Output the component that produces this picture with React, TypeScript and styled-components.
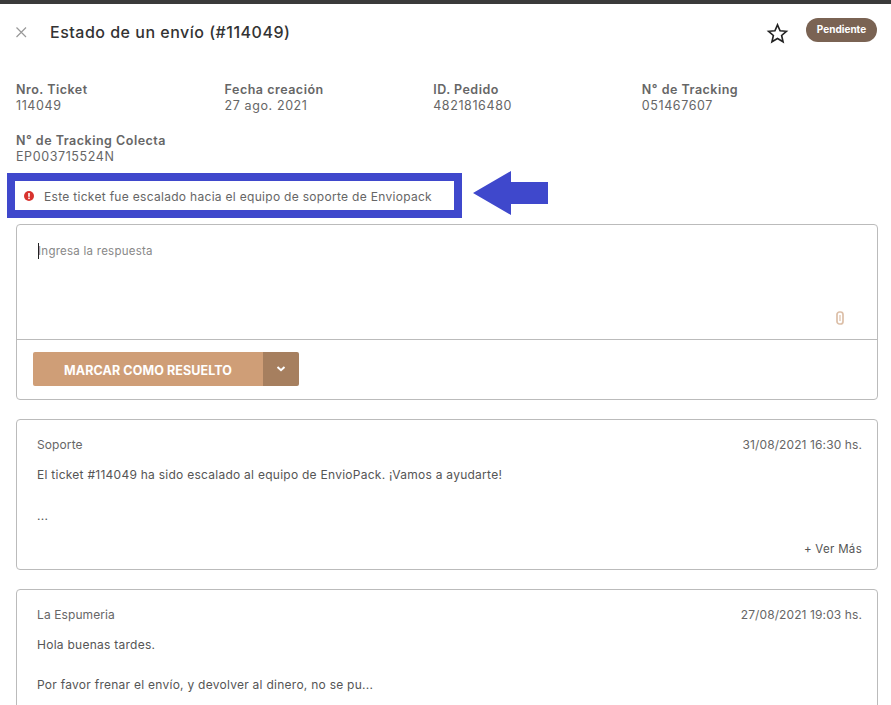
import React from "react";
import styled, { createGlobalStyle } from "styled-components";

const Global = createGlobalStyle`
  html, body { margin: 0; padding: 0; background: #fff; height: 705px; overflow: hidden; }
  body { font-family: Inter, "Open Sans", "Liberation Sans", sans-serif; color: #555; }
`;

const Page = styled.div`
  position: relative;
  height: 705px;
  overflow: hidden;
  border-top: 4px solid #3a3a3a;
  box-sizing: border-box;
`;

const Header = styled.header`
  display: flex;
  align-items: center;
  height: 56px;
  padding: 0 14px 0 15px;
`;

const CloseButton = styled.span`
  display: flex;
  width: 35px;
  color: #999;
`;

const Title = styled.h1`
  flex: 1;
  margin: 0 0 1px;
  font-size: 16px;
  line-height: 20px;
  font-weight: 500;
  color: #333;
  letter-spacing: 0.5px;
`;

const StarIcon = styled.svg`
  width: 23px;
  height: 23px;
  margin: 2px 17px 0 0;
`;

const Pill = styled.span`
  display: flex;
  align-items: center;
  justify-content: center;
  width: 71px;
  height: 24px;
  margin-top: -4px;
  padding-bottom: 3px;
  box-sizing: border-box;
  border-radius: 12px;
  background: #7a6353;
  color: #fff;
  font-size: 10px;
  font-weight: 700;
`;

const Fields = styled.section`
  display: grid;
  grid-template-columns: repeat(4, 208.6px);
  row-gap: 19px;
  padding: 22px 0 0 16px;
`;

const Field = styled.div`
  display: flex;
  flex-direction: column;
`;

const Label = styled.span`
  font-size: 12.5px;
  line-height: 16px;
  font-weight: 600;
  color: #666;
  letter-spacing: 0.5px;
  white-space: nowrap;
`;

const Value = styled.span`
  font-size: 12.5px;
  line-height: 16px;
  color: #666;
  letter-spacing: 0.6px;
`;

const Alert = styled.div`
  display: flex;
  align-items: center;
  gap: 10px;
  width: 455px;
  height: 45px;
  margin: 8px 0 0 7px;
  padding: 1px 0 0 9px;
  box-sizing: border-box;
  border: 8px solid #3f48cc;
  font-size: 12px;
  color: #666;
  letter-spacing: 0.3px;
  white-space: nowrap;
`;

const AlertIcon = styled.svg`
  width: 10px;
  height: 10px;
  flex: none;
`;

const Arrow = styled.svg`
  position: absolute;
  left: 473px;
  top: 167px;
  width: 75px;
  height: 44px;
`;

const Box = styled.div`
  margin: 0 13px 0 16px;
  border: 1px solid #bbb;
  border-radius: 4px;
  box-sizing: border-box;
  background: #fff;
`;

const ReplyBox = styled(Box)`
  margin-top: 6px;
  height: 176px;
  display: flex;
  flex-direction: column;
`;

const Editor = styled.div`
  position: relative;
  height: 115px;
  border-bottom: 1px solid #bbb;
  padding: 19px 0 0 21px;
  box-sizing: border-box;
`;

const Caret = styled.span`
  position: absolute;
  left: 21px;
  top: 18px;
  width: 1px;
  height: 16px;
  background: #222;
`;

const Placeholder = styled.span`
  display: block;
  font-size: 11.5px;
  line-height: 14px;
  color: #888;
  letter-spacing: 0.25px;
`;

const Clip = styled.svg`
  position: absolute;
  right: 32px;
  bottom: 14px;
  width: 10px;
  height: 14px;
`;

const Actions = styled.div`
  padding: 12px 0 0 16px;
`;

const SplitButton = styled.div`
  display: flex;
  width: 266px;
  height: 34px;
  border-radius: 2px;
  overflow: hidden;
  color: #fff;
`;

const MainAction = styled.span`
  flex: 1;
  display: flex;
  align-items: center;
  justify-content: center;
  padding-top: 2px;
  background: #cf9e77;
  font-size: 12.5px;
  font-weight: 700;
  letter-spacing: 0.1px;
`;

const MenuAction = styled.span`
  display: flex;
  align-items: center;
  justify-content: center;
  width: 36px;
  background: #a67f5f;
`;

const Card = styled(Box)`
  position: relative;
  margin-top: 19px;
  height: ${(p: { $h: number }) => p.$h}px;
  padding: 16px 15px 0 20px;
`;

const CardHead = styled.div`
  display: flex;
  justify-content: space-between;
  font-size: 12px;
  line-height: 18px;
  color: #666;
  letter-spacing: 0.1px;
`;

const CardText = styled.p`
  margin: ${(p: { $top: number }) => p.$top}px 0 0;
  font-size: 12px;
  line-height: 18px;
  color: #555;
  letter-spacing: 0.26px;
`;

const More = styled.span`
  position: absolute;
  right: 15px;
  bottom: 11px;
  font-size: 11.5px;
  line-height: 18px;
  color: #555;
  letter-spacing: 0.3px;
`;

const fields = [
  ["Nro. Ticket", "114049"],
  ["Fecha creación", "27 ago. 2021"],
  ["ID. Pedido", "4821816480"],
  ["N° de Tracking", "051467607"],
  ["N° de Tracking Colecta", "EP003715524N"],
];

export default function App() {
  return (
    <Page>
      <Global />
      <Header>
        <CloseButton>
          <svg width="13" height="13" viewBox="0 0 13 13" fill="none" stroke="currentColor" strokeWidth="1.2">
            <path d="M1.5 1.5l9.5 9.5M11 1.5L1.5 11" />
          </svg>
        </CloseButton>
        <Title>Estado de un envío (#114049)</Title>
        <StarIcon viewBox="0 0 24 24" fill="none" stroke="#222" strokeWidth="1.7" strokeLinejoin="miter">
          <path d="M12 3l2.7 6.1 6.6.6-5 4.4 1.5 6.5L12 17.2l-5.8 3.4 1.5-6.5-5-4.4 6.6-.6z" />
        </StarIcon>
        <Pill>Pendiente</Pill>
      </Header>
      <Fields>
        {fields.map(([label, value]) => (
          <Field key={label}>
            <Label>{label}</Label>
            <Value>{value}</Value>
          </Field>
        ))}
      </Fields>
      <Alert>
        <AlertIcon viewBox="0 0 10 10">
          <circle cx="5" cy="5" r="5" fill="#d8322d" />
          <rect x="4.2" y="2" width="1.6" height="3.8" fill="#fff" />
          <rect x="4.2" y="6.6" width="1.6" height="1.5" fill="#fff" />
        </AlertIcon>
        Este ticket fue escalado hacia el equipo de soporte de Enviopack
      </Alert>
      <Arrow viewBox="0 0 75 44">
        <path d="M0 22L38 0V11H75V33H38V44Z" fill="#3f48cc" />
      </Arrow>
      <ReplyBox>
        <Editor>
          <Caret />
          <Placeholder>Ingresa la respuesta</Placeholder>
          <Clip viewBox="0 0 10 14" fill="none" stroke="#dcbfa8" strokeWidth="1.7">
            <rect x="2" y="1" width="6" height="12" rx="2.5" />
            <path d="M5 4v6" strokeWidth="1.2" />
          </Clip>
        </Editor>
        <Actions>
          <SplitButton>
            <MainAction>MARCAR COMO RESUELTO</MainAction>
            <MenuAction>
              <svg width="10" height="8" viewBox="0 0 10 8" fill="none" stroke="#fff" strokeWidth="2">
                <path d="M1.5 2l3.5 3.2L8.5 2" />
              </svg>
            </MenuAction>
          </SplitButton>
        </Actions>
      </ReplyBox>
      <Card $h={151}>
        <CardHead>
          <span>Soporte</span>
          <span>31/08/2021 16:30 hs.</span>
        </CardHead>
        <CardText $top={12}>El ticket #114049 ha sido escalado al equipo de EnvioPack. ¡Vamos a ayudarte!</CardText>
        <CardText $top={23}>...</CardText>
        <More>+ Ver Más</More>
      </Card>
      <Card $h={151}>
        <CardHead>
          <span>La Espumeria</span>
          <span>27/08/2021 19:03 hs.</span>
        </CardHead>
        <CardText $top={12}>Hola buenas tardes.</CardText>
        <CardText $top={22}>Por favor frenar el envío, y devolver al dinero, no se pu...</CardText>
      </Card>
    </Page>
  );
}
